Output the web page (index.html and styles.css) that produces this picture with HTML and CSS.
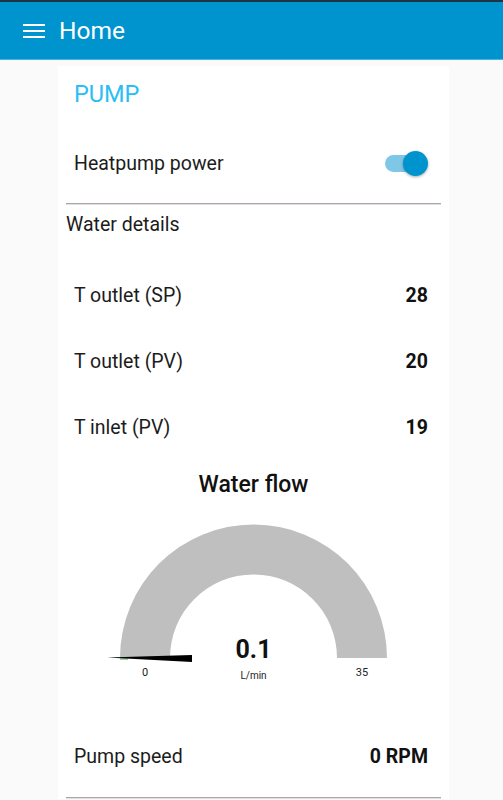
FILE: index.html
```html
<!DOCTYPE html>
<html>
<head>
<meta charset="utf-8">
<link rel="stylesheet" href="styles.css">
</head>
<body>
<header class="toolbar">
  <svg class="menu" width="22" height="16" viewBox="0 0 22 16">
    <rect x="0" y="1" width="22" height="2" fill="#fff"/>
    <rect x="0" y="7" width="22" height="2" fill="#fff"/>
    <rect x="0" y="13" width="22" height="2" fill="#fff"/>
  </svg>
  <span class="title">Home</span>
</header>
<main class="content">
  <section class="card">
    <div class="group-title">PUMP</div>
    <div class="row switch-row">
      <span class="label">Heatpump power</span>
      <span class="switch"><span class="track"></span><span class="knob"></span></span>
    </div>
    <div class="sep"></div>
    <div class="subhead">Water details</div>
    <div class="rows">
      <div class="row text-row"><span class="label">T outlet (SP)</span><span class="value">28</span></div>
      <div class="row text-row"><span class="label">T outlet (PV)</span><span class="value">20</span></div>
      <div class="row text-row"><span class="label">T inlet (PV)</span><span class="value">19</span></div>
    </div>
    <div class="gauge-title">Water flow</div>
    <svg class="gauge" width="374" height="200" viewBox="0 0 374 200">
      <path d="M54 148 A133.5 133.5 0 0 1 321 148 L271 148 A83.5 83.5 0 0 0 104 148 Z" fill="#bfbfbf"/>
      <line x1="54" y1="149" x2="62" y2="149" stroke="#1a8a1a" stroke-width="0.8"/>
      <polygon points="41,147.5 126,145 126,152" fill="#000"/>
      <text x="187.5" y="147.5" class="g-value" text-anchor="middle">0.1</text>
      <text x="187.5" y="169" class="g-unit" text-anchor="middle">L/min</text>
      <text x="79" y="166" class="g-lim" text-anchor="middle">0</text>
      <text x="296" y="166" class="g-lim" text-anchor="middle">35</text>
    </svg>
    <div class="row text-row pump-row"><span class="label">Pump speed</span><span class="value">0 RPM</span></div>
    <div class="sep bottom"></div>
  </section>
</main>
</body>
</html>
```

FILE: styles.css
```css
html, body {
  margin: 0;
  padding: 0;
  background: #fafafa;
  font-family: Roboto, "Liberation Sans", sans-serif;
  color: #1c1c1c;
}
.toolbar {
  height: 57px;
  background: #0094ce;
  border-top: 2px solid #1d3544;
  display: flex;
  align-items: center;
  padding-left: 23px;
  gap: 14px;
  box-shadow: 0 1px 0 #4fb3de;
}
.menu {
  display: block;
  margin-top: 1px;
}
.title {
  color: #fff;
  font-size: 24.5px;
  line-height: 1;
  margin-top: 1px;
}
.content {
  padding-top: 7px;
  padding-left: 58px;
}
.card {
  width: 375px;
  background: #fff;
  padding: 0 8px 0 8px;
  box-sizing: content-box;
}
.group-title {
  height: 57px;
  line-height: 57px;
  padding-left: 8px;
  color: #2bbdf5;
  font-size: 23.5px;
}
.row {
  display: flex;
  align-items: center;
  justify-content: space-between;
  padding: 0 13px 0 8px;
  font-size: 19.5px;
}
.switch-row {
  height: 80px;
}
.switch {
  position: relative;
  width: 43px;
  height: 25px;
  display: block;
}
.track {
  position: absolute;
  left: 0;
  top: 4px;
  width: 36px;
  height: 17px;
  border-radius: 9px;
  background: #7fc7e7;
}
.knob {
  position: absolute;
  right: 0;
  top: 0;
  width: 25px;
  height: 25px;
  border-radius: 50%;
  background: #0094ce;
  box-shadow: 0 1px 3px rgba(0,0,0,0.35);
}
.sep {
  height: 1px;
  background: #aca7a4;
  border-bottom: 1px solid #e2dfdd;
}
.subhead {
  height: 40px;
  line-height: 40px;
  font-size: 19.5px;
}
.rows {
  margin-top: 17px;
}
.text-row {
  height: 66px;
}
.value {
  font-weight: 700;
  color: #111;
}
.gauge-title {
  height: 50px;
  line-height: 50px;
  text-align: center;
  font-size: 23px;
  font-weight: 500;
  color: #111;
}
.gauge {
  display: block;
}
.g-value {
  font-family: Roboto, "Liberation Sans", sans-serif;
  font-size: 25px;
  font-weight: 700;
  fill: #111;
}
.g-unit {
  font-family: Roboto, "Liberation Sans", sans-serif;
  font-size: 10px;
  fill: #222;
}
.g-lim {
  font-family: Roboto, "Liberation Sans", sans-serif;
  font-size: 11px;
  fill: #222;
}
.pump-row {
  margin-top: 13px;
}
.sep.bottom {
  margin-top: 8px;
}
```
